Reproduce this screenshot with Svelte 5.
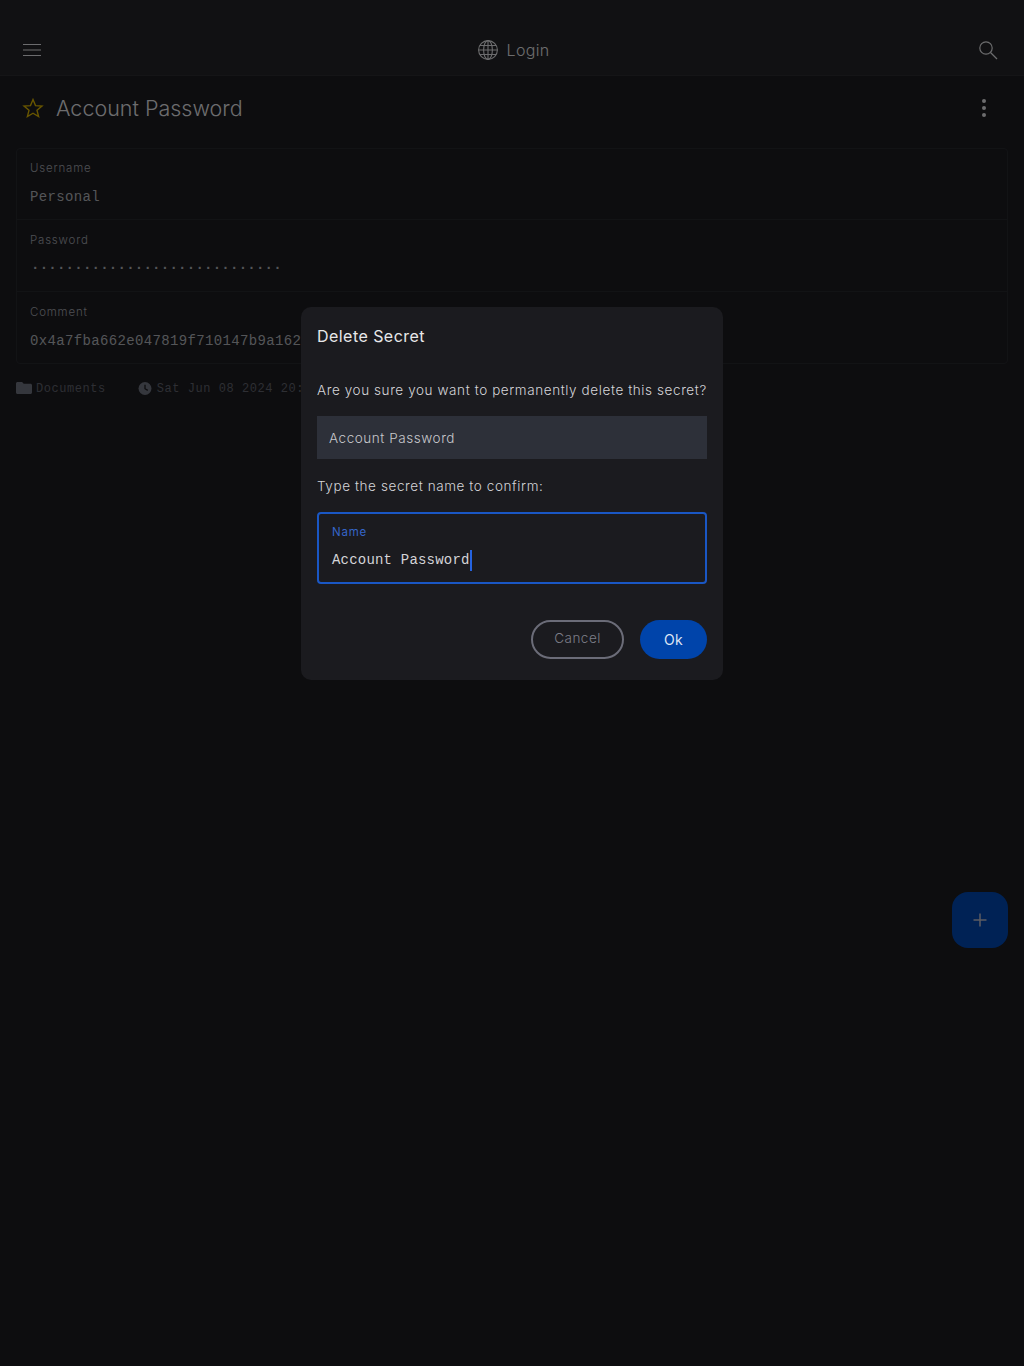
<script>
  const dots = "·".repeat(29);
</script>

<div class="page">
  <header class="topbar">
    <button class="icon-btn" aria-label="Menu">
      <svg width="24" height="24" viewBox="0 0 24 24" fill="none" stroke="currentColor" stroke-width="1.2"><path d="M3 6.500h18M3 12h18M3 17.500h18" /></svg>
    </button>
    <div class="topbar-title">
      <svg width="22" height="22" viewBox="0 0 22 22" fill="none" stroke="currentColor" stroke-width="1.100">
        <circle cx="11" cy="11" r="9.400" />
        <ellipse cx="11" cy="11" rx="4.400" ry="9.400" />
        <path d="M11 1.600v18.800M1.600 11h18.800M2.900 6.500h16.200M2.900 15.500h16.200" />
      </svg>
      <span>Login</span>
    </div>
    <button class="icon-btn" aria-label="Search">
      <svg width="24" height="24" viewBox="0 0 24 24" fill="none" stroke="currentColor" stroke-width="1.200"><circle cx="10" cy="10" r="6.200" /><path d="M14.500 14.500l6.500 6.500" /></svg>
    </button>
  </header>

  <main class="content">
    <div class="title-row">
      <svg class="star" width="24" height="24" viewBox="0 0 24 24" fill="none" stroke="currentColor" stroke-width="1.400"><path d="M12 3.600l2.500 6 6.500.5-5 4.200 1.600 6.300L12 17.200l-5.600 3.400L8 14.300 3 10.100l6.500-.5z" /></svg>
      <h1>Account Password</h1>
      <button class="more" aria-label="More">
        <span></span><span></span><span></span>
      </button>
    </div>

    <section class="card">
      <div class="field">
        <div class="label">Username</div>
        <div class="value">Personal</div>
      </div>
      <div class="field">
        <div class="label">Password</div>
        <div class="value secret">{dots}</div>
      </div>
      <div class="field">
        <div class="label">Comment</div>
        <div class="value">0x4a7fba662e047819f710147b9a162c</div>
      </div>
    </section>

    <div class="meta">
      <span class="meta-item">
        <svg width="16" height="14" viewBox="0 0 16 14" fill="currentColor"><path d="M1.500 0h4.600l1.600 1.700h6.800c.8 0 1.500.7 1.500 1.400v7.400c0 .8-.7 1.500-1.500 1.500h-13C.7 12 0 11.300 0 10.500v-9C0 .7.700 0 1.500 0z" /></svg>
        Documents
      </span>
      <span class="meta-item">
        <svg width="14" height="14" viewBox="0 0 14 14"><circle cx="7" cy="6.500" r="6.500" fill="currentColor" /><path d="M7 2.700v4l2.800 1.700" fill="none" stroke="#1a1a1e" stroke-width="1.300" /></svg>
        Sat Jun 08 2024 20:
      </span>
    </div>
  </main>

  <button class="fab" aria-label="Add">
    <svg width="16" height="16" viewBox="0 0 16 16" stroke="currentColor" stroke-width="1.500"><path d="M8 1.500v13M1.500 8h13" /></svg>
  </button>

  <div class="scrim"></div>

  <div class="dialog" role="dialog">
    <h2>Delete Secret</h2>
    <p class="question">Are you sure you want to permanently delete this secret?</p>
    <div class="name-box">Account Password</div>
    <p class="confirm">Type the secret name to confirm:</p>
    <div class="input">
      <div class="input-label">Name</div>
      <div class="input-value">Account Password<span class="caret"></span></div>
    </div>
    <div class="actions">
      <button class="btn-cancel">Cancel</button>
      <button class="btn-ok">Ok</button>
    </div>
  </div>
</div>

<style>
  :global(body) {
    margin: 0;
    background: #1a1a1e;
  }

  .page {
    position: relative;
    width: 1024px;
    height: 1366px;
    overflow: hidden;
    background: #1a1a1e;
    font-family: Inter, "Liberation Sans", sans-serif;
    color: #d9d9dc;
  }

  button {
    font-family: inherit;
    border: none;
    background: none;
    padding: 0;
    color: inherit;
  }

  .topbar {
    height: 76px;
    box-sizing: border-box;
    padding: 24px 24px 0 20px;
    display: flex;
    align-items: center;
    justify-content: space-between;
    background: #222326;
    border-bottom: 1px solid #2a2b2e;
  }

  .icon-btn {
    width: 24px;
    height: 24px;
    display: flex;
  }

  .topbar-title {
    display: flex;
    align-items: center;
    gap: 8px;
    margin-left: 6px;
    font-size: 16px;
    letter-spacing: 0.3px;
    font-weight: 300;
  }

  .content {
    padding: 0 16px;
  }

  .title-row {
    height: 64px;
    padding: 0 12px 0 5px;
    display: flex;
    align-items: center;
    margin-bottom: 8px;
  }

  .star {
    color: #d0ac00;
    flex: none;
  }

  h1 {
    margin: 0 0 0 11px;
    font-size: 21.500px;
    font-weight: 300;
    flex: 1;
  }

  .more {
    width: 24px;
    height: 24px;
    display: flex;
    flex-direction: column;
    align-items: center;
    justify-content: center;
    gap: 3px;
  }

  .more span {
    width: 4px;
    height: 4px;
    border-radius: 50%;
    background: #d9d9dc;
  }

  .card {
    border: 1px solid #25262b;
    border-radius: 4px;
  }

  .field {
    height: 72px;
    box-sizing: border-box;
    padding: 13px 13px 0;
    border-bottom: 1px solid #25262b;
  }

  .field:first-child {
    height: 71px;
    padding-top: 12px;
  }

  .field:last-child {
    border-bottom: none;
    height: 71px;
  }

  .label {
    font-size: 11.500px;
    line-height: 14px;
    letter-spacing: 0.8px;
    color: #9c9ea6;
    font-weight: 300;
  }

  .value {
    margin-top: 12px;
    font-family: "Liberation Mono", monospace;
    font-size: 14px;
    line-height: 20px;
    letter-spacing: 0.35px;
    color: #a8aab0;
  }

  .secret {
    font-weight: 700;
    letter-spacing: 0.25px;
    margin-top: 11px;
    margin-left: 1px;
  }

  .meta {
    display: flex;
    gap: 34px;
    margin-top: 18px;
    font-family: "Liberation Mono", monospace;
    font-size: 12px;
    letter-spacing: 0.55px;
    color: #5c5e68;
    white-space: nowrap;
  }

  .meta-item {
    display: flex;
    align-items: center;
    gap: 4px;
  }

  .meta-item svg {
    color: #6b6e7a;
  }

  .meta-item + .meta-item {
    margin-left: -2px;
    gap: 5px;
  }

  .fab {
    position: absolute;
    left: 952px;
    top: 892px;
    width: 56px;
    height: 56px;
    border-radius: 16px;
    background: #0044aa;
    color: #b8b8c4;
    display: flex;
    align-items: center;
    justify-content: center;
  }

  .scrim {
    position: absolute;
    inset: 0;
    background: rgba(0, 0, 0, 0.5);
  }

  .dialog {
    position: absolute;
    left: 301px;
    top: 307px;
    width: 422px;
    height: 373px;
    box-sizing: border-box;
    padding: 19px 16px;
    border-radius: 10px;
    background: #1b1b1f;
  }

  h2 {
    margin: 0;
    font-size: 16px;
    line-height: 20px;
    font-weight: 400;
    letter-spacing: 0.45px;
    color: #e8e8ea;
  }

  p {
    margin: 0;
    font-size: 13.500px;
    line-height: 20px;
    letter-spacing: 0.59px;
    font-weight: 300;
    color: #d4d4d8;
    white-space: nowrap;
  }

  .question {
    margin-top: 34px;
  }

  .name-box {
    margin-top: 16px;
    height: 43px;
    box-sizing: border-box;
    padding: 1px 12px 0;
    display: flex;
    align-items: center;
    background: #2d3039;
    font-size: 13.500px;
    font-weight: 300;
    letter-spacing: 0.55px;
    color: #c8c8cc;
  }

  .confirm {
    margin-top: 17px;
  }

  .input {
    margin-top: 16px;
    height: 72px;
    box-sizing: border-box;
    border: 2px solid #1a57c4;
    border-radius: 4px;
    padding: 11px 13px 0;
  }

  .input-label {
    font-size: 11.500px;
    line-height: 14px;
    letter-spacing: 0.8px;
    color: #3565c8;
  }

  .input-value {
    margin-top: 9px;
    height: 24px;
    display: flex;
    align-items: center;
    font-family: "Liberation Mono", monospace;
    font-size: 14px;
    letter-spacing: 0.2px;
    color: #d4d4d8;
  }

  .caret {
    width: 2px;
    height: 21px;
    background: #2563e0;
  }

  .actions {
    margin-top: 36px;
    display: flex;
    justify-content: flex-end;
    gap: 16px;
  }

  .btn-cancel {
    width: 93px;
    height: 39px;
    box-sizing: border-box;
    border: 2px solid #6b6c78;
    border-radius: 20px;
    font-size: 13.500px;
    font-weight: 300;
    letter-spacing: 0.5px;
    color: #7d7e88;
    padding-bottom: 3px;
  }

  .btn-ok {
    width: 67px;
    height: 39px;
    border-radius: 20px;
    background: #0044aa;
    font-size: 14px;
    letter-spacing: 0.3px;
    color: #dfe6f5;
  }
</style>
